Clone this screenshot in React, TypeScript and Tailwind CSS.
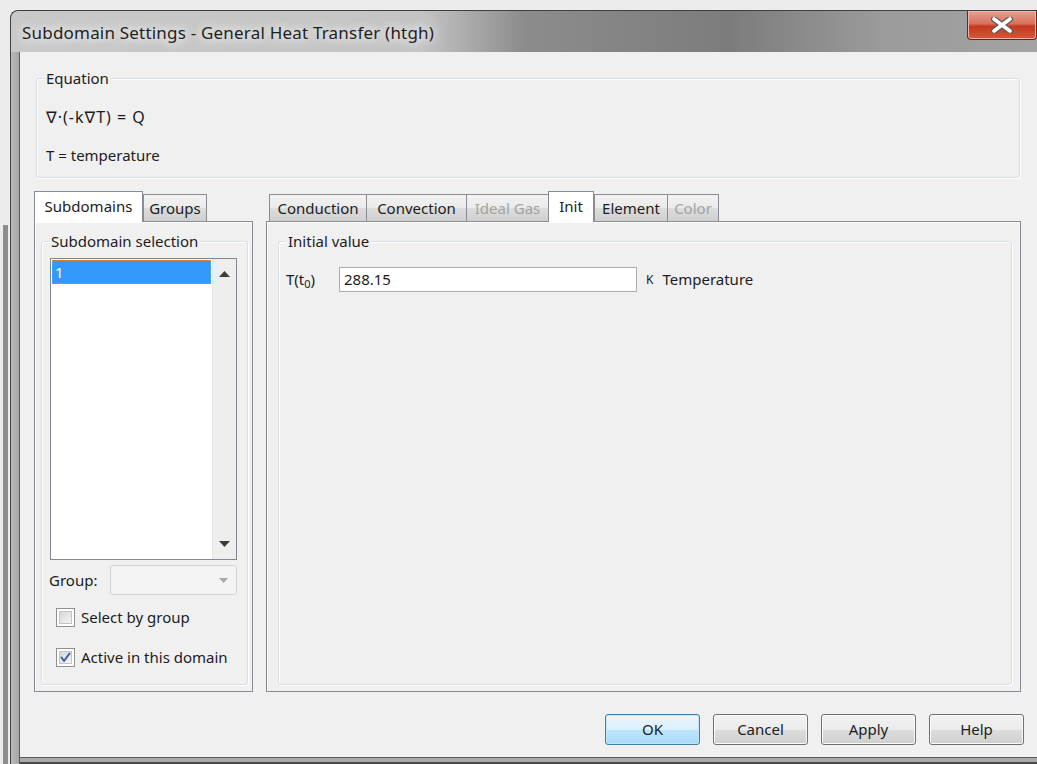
import React from "react";

const font = "font-['Noto_Sans','DejaVu_Sans',sans-serif]";

function GroupBox({
  title,
  className,
  children,
}: {
  title: string;
  className: string;
  children?: React.ReactNode;
}) {
  return (
    <div
      className={`relative rounded-[3px] border border-[#d5dfe5] shadow-[inset_1px_1px_0_#ffffff,1px_1px_0_#ffffff] ${className}`}
    >
      <span className="absolute -top-[11px] left-[7px] bg-[#f0f0f0] px-[2px] leading-[20px]">
        {title}
      </span>
      {children}
    </div>
  );
}

function Tab({
  label,
  width,
  active,
  disabled,
}: {
  label: string;
  width: string;
  active?: boolean;
  disabled?: boolean;
}) {
  if (active) {
    return (
      <div
        className={`${width} relative z-10 -mb-px flex h-[31px] items-start justify-center border border-b-0 border-[#898c95] bg-white pt-[3px]`}
      >
        {label}
      </div>
    );
  }
  return (
    <div
      className={`${width} -mr-px flex h-[27px] items-center justify-center border border-b-0 border-[#898c95] bg-[linear-gradient(to_bottom,#f2f2f2,#ebebeb_50%,#dddddd_51%,#cfcfcf)] ${
        disabled ? "text-[#a3a3a3]" : ""
      }`}
    >
      {label}
    </div>
  );
}

function Checkbox({ label, checked }: { label: string; checked?: boolean }) {
  return (
    <div className="flex h-[19px] items-center gap-[6px]">
      <div className="flex h-[19px] w-[19px] items-center justify-center border border-[#8e8f8f] bg-white">
        <div className="flex h-[13px] w-[13px] items-center justify-center border border-[#c4c4c4] bg-[linear-gradient(135deg,#d6d6d6,#f4f4f4)]">
          {checked && (
            <svg width="11" height="11" viewBox="0 0 11 11">
              <path
                d="M1.5 5.5 L4 9 L9.5 1.5"
                fill="none"
                stroke="#3d5fa8"
                strokeWidth="2"
                strokeLinecap="round"
                strokeLinejoin="round"
              />
            </svg>
          )}
        </div>
      </div>
      <span>{label}</span>
    </div>
  );
}

function Button({ label, focused }: { label: string; focused?: boolean }) {
  return (
    <button
      className={`flex h-[31px] w-[95px] items-center justify-center rounded-[3px] border ${
        focused
          ? "border-[#3c7fb1] bg-[linear-gradient(to_bottom,#eaf6fd,#d9f0fc_50%,#bee6fd_51%,#a7d9f5)] shadow-[inset_0_0_0_1px_#c4e5f6]"
          : "border-[#707070] bg-[linear-gradient(to_bottom,#f2f2f2,#ebebeb_50%,#dddddd_51%,#cfcfcf)] shadow-[inset_0_0_0_1px_#fcfcfc]"
      }`}
    >
      {label}
    </button>
  );
}

export default function App() {
  return (
    <div
      className={`flex h-[764px] w-[1037px] overflow-hidden bg-[#ececec] text-[15px] text-[#1c1c1c] ${font}`}
    >
      {/* ventana detras, solo se ve un borde */}
      <div className="flex w-[10px] flex-col">
        <div className="h-[225px]" />
        <div className="ml-[3px] w-[5px] flex-1 bg-[#8d8d8d]" />
      </div>

      <div className="flex flex-1 flex-col">
        <div className="h-[10px]" />

        <div className="flex flex-1 flex-col rounded-tl-[8px] border-l border-t border-[#3f3f3f] bg-[linear-gradient(to_right,#c9c9c9,#c4c4c4_40%,#8c8c8c_50%,#7c7c7c_70%,#9b9b9b_85%,#a3a3a3)]">
          {/* barra de titulo */}
          <div className="flex h-[41px] items-start justify-between">
            <div className="pl-[11px] pt-[11px] text-[17px] leading-[22px] tracking-[0.2px] text-[#1e1e1e] [text-shadow:0_0_8px_#ffffff,0_0_14px_#f4f4f4]">
              Subdomain Settings - General Heat Transfer (htgh)
            </div>
            <div className="flex h-[29px] w-[70px] items-center justify-center rounded-b-[4px] border border-t-0 border-[#6b2419] bg-[linear-gradient(to_bottom,#e6a293,#d8705c_45%,#c5391f_55%,#d4583b)] shadow-[inset_0_0_0_1px_#f0b5a8]">
              <svg width="22" height="16" viewBox="0 0 22 16">
                <path
                  d="M3 2 L19 14 M19 2 L3 14"
                  stroke="#5a5a5a"
                  strokeWidth="6"
                  strokeLinecap="round"
                />
                <path
                  d="M3 2 L19 14 M19 2 L3 14"
                  stroke="#ffffff"
                  strokeWidth="3.6"
                  strokeLinecap="round"
                />
              </svg>
            </div>
          </div>

          <div className="flex flex-1">
            {/* marco izquierdo */}
            <div className="w-[9px] border-r border-[#5b5b5b] bg-[linear-gradient(to_right,#b9b9b9,#a6a6a6)]" />

            <div className="flex flex-1 flex-col">
              <div className="flex flex-1 flex-col border-b border-[#5b5b5b] bg-[#f0f0f0]">
                {/* Equation */}
                <GroupBox title="Equation" className="ml-[16px] mr-[17px] mt-[26px] h-[100px]">
                  <div className="pl-[9px] pt-[28px] text-[16px] leading-[20px] tracking-[1px]">
                    ∇·(-k∇T) = Q
                  </div>
                  <div className="pl-[9px] pt-[18px] leading-[20px]">T = temperature</div>
                </GroupBox>

                <div className="ml-[14px] mt-[13px] flex gap-[13px]">
                  {/* panel izquierdo */}
                  <div className="flex w-[219px] flex-col">
                    <div className="flex h-[30px] items-end">
                      <Tab label="Subdomains" width="w-[109px]" active />
                      <Tab label="Groups" width="w-[64px]" />
                    </div>
                    <div className="h-[471px] border border-[#898c95] bg-[#f0f0f0] pl-[6px] pt-[19px] shadow-[inset_1px_1px_0_#ffffff]">
                      <GroupBox title="Subdomain selection" className="h-[444px] w-[207px]">
                        <div className="ml-[8px] mt-[16px] flex h-[302px] w-[187px] border border-[#828790] bg-white">
                          <div className="flex-1 p-px">
                            <div className="h-[24px] border border-dotted border-[#e08a3c] bg-[#3399ff] pl-[2px] leading-[22px] text-white">
                              1
                            </div>
                          </div>
                          <div className="flex w-[24px] flex-col items-center justify-between border-l border-[#e6e6e6] bg-[#eeeeee] py-[12px]">
                            <svg width="11" height="6" viewBox="0 0 11 6">
                              <path d="M0 6 L5.5 0 L11 6 Z" fill="#3c3c3c" />
                            </svg>
                            <svg width="11" height="6" viewBox="0 0 11 6">
                              <path d="M0 0 L5.5 6 L11 0 Z" fill="#3c3c3c" />
                            </svg>
                          </div>
                        </div>

                        <div className="ml-[7px] mt-[5px] flex items-center">
                          <span className="w-[61px]">Group:</span>
                          <div className="flex h-[30px] w-[127px] items-center justify-end rounded-[3px] border border-[#d2d2d2] bg-[#f4f4f4] pr-[8px]">
                            <svg width="9" height="5" viewBox="0 0 9 5">
                              <path d="M0 0 L4.5 5 L9 0 Z" fill="#a8a8a8" />
                            </svg>
                          </div>
                        </div>

                        <div className="ml-[14px] mt-[13px] flex flex-col gap-[21px]">
                          <Checkbox label="Select by group" />
                          <Checkbox label="Active in this domain" checked />
                        </div>
                      </GroupBox>
                    </div>
                  </div>

                  {/* panel derecho */}
                  <div className="flex w-[755px] flex-col">
                    <div className="flex h-[30px] items-end pl-[3px]">
                      <Tab label="Conduction" width="w-[98px]" />
                      <Tab label="Convection" width="w-[101px]" />
                      <Tab label="Ideal Gas" width="w-[83px]" disabled />
                      <Tab label="Init" width="w-[46px]" active />
                      <Tab label="Element" width="w-[74px]" />
                      <Tab label="Color" width="w-[52px]" disabled />
                    </div>
                    <div className="h-[471px] border border-[#898c95] bg-[#f0f0f0] pl-[11px] pt-[19px] shadow-[inset_1px_1px_0_#ffffff]">
                      <GroupBox title="Initial value" className="h-[444px] w-[734px]">
                        <div className="ml-[7px] mt-[25px] flex h-[25px] items-center">
                          <span className="w-[53px]">
                            T(t<sub className="text-[11px]">0</sub>)
                          </span>
                          <div className="h-[25px] w-[298px] border border-[#abadb3] bg-white pl-[4px] leading-[23px]">
                            288.15
                          </div>
                          <span className="ml-[9px] text-[12px]">K</span>
                          <span className="ml-[9px]">Temperature</span>
                        </div>
                      </GroupBox>
                    </div>
                  </div>
                </div>

                <div className="mr-[13px] mt-[22px] flex justify-end gap-[13px]">
                  <Button label="OK" focused />
                  <Button label="Cancel" />
                  <Button label="Apply" />
                  <Button label="Help" />
                </div>
              </div>
              {/* marco inferior */}
              <div className="h-[6px] border-b-2 border-[#4a4a4a] bg-[#a9a9a9]" />
            </div>
          </div>
        </div>
      </div>
    </div>
  );
}
